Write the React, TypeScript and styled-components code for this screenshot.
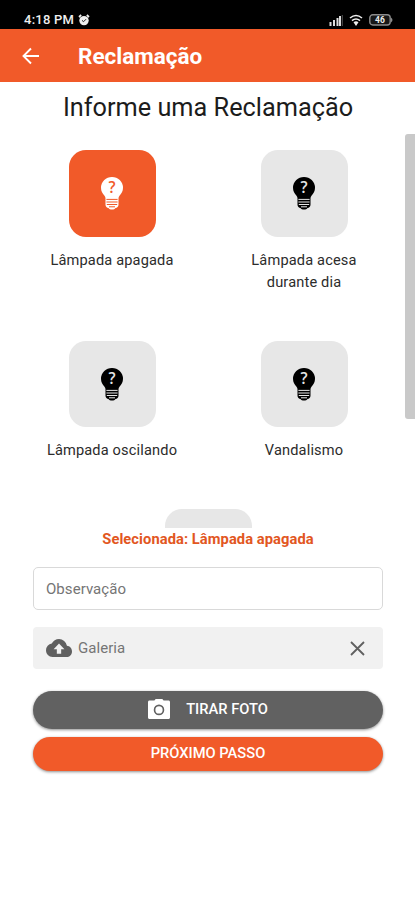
import React from "react";
import styled, { createGlobalStyle } from "styled-components";

const ORANGE = "#f15a29";

const GlobalStyle = createGlobalStyle`
  *, *::before, *::after { box-sizing: border-box; }
  html, body { margin: 0; padding: 0; background: #fff; }
  body { font-family: Roboto, "Liberation Sans", sans-serif; color: #1c1c1c; overflow: hidden; }
  button, input { font-family: inherit; }
`;

const Screen = styled.div`
  display: flex;
  flex-direction: column;
  width: 415px;
  height: 900px;
  background: #fff;
`;

const StatusBar = styled.div`
  display: flex;
  align-items: flex-end;
  justify-content: space-between;
  height: 29px;
  padding: 0 21px 2px 24px;
  background: #000;
  color: #eee;
`;

const StatusGroup = styled.div<{ $gap: number }>`
  display: flex;
  align-items: center;
  gap: ${(p) => p.$gap}px;
  height: 14px;
`;

const Clock = styled.span`
  font-size: 13px;
  font-weight: 500;
  line-height: 14px;
  letter-spacing: 0.25px;
`;

const AppBar = styled.header`
  display: flex;
  align-items: center;
  height: 53px;
  padding-left: 22px;
  background: ${ORANGE};
  color: #fff;
`;

const BackButton = styled.button`
  display: flex;
  width: 18px;
  height: 18px;
  margin-right: 38px;
  padding: 0;
  border: 0;
  background: none;
  color: inherit;
`;

const AppTitle = styled.h1`
  margin: 0;
  font-size: 22.5px;
  font-weight: 700;
  line-height: 28px;
`;

const Heading = styled.h2`
  margin: 0;
  height: 52px;
  padding: 10px 0 0 1px;
  font-size: 25.3px;
  font-weight: 400;
  line-height: 32px;
  text-align: center;
  white-space: nowrap;
`;

const ListArea = styled.div`
  display: flex;
  height: 394px;
  overflow: hidden;
`;

const Options = styled.div`
  display: flex;
  flex-wrap: wrap;
  align-content: flex-start;
  justify-content: center;
  row-gap: 48px;
  width: 384px;
  margin: 0 5px 0 16px;
  padding-top: 16px;
`;

const Option = styled.div`
  display: flex;
  flex-direction: column;
  align-items: center;
  width: 192px;
`;

const Tile = styled.button<{ $selected?: boolean }>`
  display: flex;
  align-items: center;
  justify-content: center;
  width: 87px;
  height: 86.5px;
  margin-bottom: 12px;
  padding: 0;
  border: 0;
  border-radius: 17px;
  background: ${(p) => (p.$selected ? ORANGE : "#e7e7e7")};
  color: ${(p) => (p.$selected ? "#fff" : "#000")};
`;

const OptionLabel = styled.span`
  max-width: 140px;
  font-size: 14.6px;
  line-height: 22px;
  letter-spacing: 0.15px;
  text-align: center;
  color: #2c2c2c;
`;

const ScrollTrack = styled.div`
  width: 10px;
`;

const ScrollThumb = styled.div`
  height: 285px;
  border-radius: 3px 0 0 3px;
  background: #c9c9c9;
`;

const Form = styled.form`
  display: flex;
  flex-direction: column;
  padding: 0 32px 0 33px;
`;

const Selected = styled.p`
  margin: 0 0 17px;
  font-size: 14.7px;
  font-weight: 700;
  line-height: 22px;
  letter-spacing: 0.07px;
  text-align: center;
  color: #e2571f;
`;

const NoteInput = styled.input`
  width: 100%;
  height: 43px;
  margin-bottom: 17px;
  padding: 0 12px;
  border: 1px solid #d9d9d9;
  border-radius: 5px;
  outline: 0;
  background: #fff;
  font-size: 15px;
  letter-spacing: 0.05px;
  &::placeholder { color: #757575; opacity: 1; }
`;

const Gallery = styled.div`
  display: flex;
  align-items: center;
  height: 42px;
  margin-bottom: 22px;
  padding: 0 18px 0 13px;
  border-radius: 4px;
  background: #f1f1f1;
  color: #606060;
`;

const GalleryLabel = styled.span`
  flex: 1;
  margin-left: 6px;
  font-size: 15px;
  letter-spacing: 0.05px;
  color: #757575;
`;

const Action = styled.button<{ $tone: string; $height: number }>`
  display: flex;
  align-items: center;
  justify-content: center;
  gap: 16px;
  height: ${(p) => p.$height}px;
  margin-bottom: 8px;
  padding: 0 0 2px;
  border: 0;
  border-radius: 20px;
  background: ${(p) => p.$tone};
  box-shadow: 0 1px 3px rgba(0, 0, 0, 0.45);
  color: #fff;
  font-size: 14.7px;
  font-weight: 500;
`;

const Glyph = styled.svg`
  display: block;
  flex: none;
`;

const BulbMark = styled.text`
  font: 600 15.5px "Open Sans", sans-serif;
`;

function Bulb({ selected }: { selected?: boolean }) {
  const cut = selected ? ORANGE : "#e7e7e7";
  return (
    <Glyph width="24" height="34" viewBox="0 0 24 34">
      <path
        fill="currentColor"
        d="M12 1a10.9 10.9 0 0 0-11 10.8c0 3.5 1.6 5.9 3.5 8 .7.8 1 1.6 1 2.6v6.3c0 2 1.4 2.9 3 3.3.6 1 1.9 1.5 3.5 1.5s2.9-.5 3.5-1.5c1.6-.4 3-1.3 3-3.3v-6.3c0-1 .3-1.8 1-2.6 1.9-2.1 3.5-4.5 3.5-8A10.9 10.9 0 0 0 12 1z"
      />
      <path d="M6.4 23.4h11.2M6.4 26h11.2M6.8 28.5h10.4M9 30.8h6" stroke={cut} strokeWidth="1" />
      <BulbMark x="12" y="17.3" textAnchor="middle" fill={cut}>?</BulbMark>
    </Glyph>
  );
}

const OPTIONS = [
  { label: "Lâmpada apagada", selected: true },
  { label: "Lâmpada acesa durante dia" },
  { label: "Lâmpada oscilando" },
  { label: "Vandalismo" },
  { label: "" },
];

export default function App() {
  return (
    <>
      <GlobalStyle />
      <Screen>
        <StatusBar>
          <StatusGroup $gap={4}>
            <Clock>4:18 PM</Clock>
            <Glyph width="12" height="12" viewBox="0 0 12 12">
              <path d="M1 3 3.2 1M11 3 8.8 1" stroke="currentColor" strokeWidth="1.7" />
              <circle cx="6" cy="6.6" r="4.7" fill="currentColor" />
              <path d="m4 6.4 1.6 1.3L8 5.2" stroke="#222" fill="none" />
            </Glyph>
          </StatusGroup>
          <StatusGroup $gap={6}>
            <Glyph width="14" height="12" viewBox="0 0 14 12">
              <path d="M1.5 8v4M5 6v6M8.5 4v8" stroke="#ddd" strokeWidth="2" />
              <path d="M11 2v10" stroke="#ddd" strokeWidth="2" />
              <path d="M13.3 1v11" stroke="#555" />
            </Glyph>
            <Glyph width="14" height="13" viewBox="0 0 14 13">
              <path d="M1 4Q7-1 13 4M3 6.7q4-3.4 8 0" stroke="#eee" strokeWidth="1.6" fill="none" />
              <path d="M4.5 8.3q2.5-2 5 0L7 12z" fill="#eee" />
            </Glyph>
            <Glyph width="25" height="12" viewBox="0 0 25 12">
              <rect x=".8" y=".8" width="20.4" height="10.2" rx="3" fill="#171717" stroke="#8c8c8c" strokeWidth="1.4" />
              <path d="M22 3.5q3 2.4 0 5z" fill="#8c8c8c" />
              <text x="11" y="9" textAnchor="middle" fontSize="8.5" fontWeight="700" fill="#eee">46</text>
            </Glyph>
          </StatusGroup>
        </StatusBar>
        <AppBar>
          <BackButton type="button" aria-label="Voltar">
            <Glyph width="18" height="18" viewBox="0 0 18 18">
              <path d="M17 9H2M9 1.5 1.5 9 9 16.5" fill="none" stroke="currentColor" strokeWidth="1.9" />
            </Glyph>
          </BackButton>
          <AppTitle>Reclamação</AppTitle>
        </AppBar>
        <Heading>Informe uma Reclamação</Heading>
        <ListArea>
          <Options>
            {OPTIONS.map((o, i) => (
              <Option key={i}>
                <Tile type="button" $selected={o.selected}>
                  {o.label && <Bulb selected={o.selected} />}
                </Tile>
                <OptionLabel>{o.label}</OptionLabel>
              </Option>
            ))}
          </Options>
          <ScrollTrack>
            <ScrollThumb />
          </ScrollTrack>
        </ListArea>
        <Form>
          <Selected>Selecionada: Lâmpada apagada</Selected>
          <NoteInput placeholder="Observação" />
          <Gallery>
            <Glyph width="26" height="18" viewBox="0 4 24 16" preserveAspectRatio="none">
              <path
                fill="currentColor"
                d="M19.35 10.04A7.49 7.49 0 0 0 12 4C9.11 4 6.6 5.64 5.35 8.04A5.994 5.994 0 0 0 0 14c0 3.31 2.69 6 6 6h13c2.76 0 5-2.24 5-5 0-2.64-2.05-4.78-4.65-4.96zM14 13v4h-4v-4H7l5-5 5 5h-3z"
              />
            </Glyph>
            <GalleryLabel>Galeria</GalleryLabel>
            <Glyph width="15" height="15" viewBox="0 0 15 15">
              <path d="m1 1 13 13M14 1 1 14" stroke="currentColor" strokeWidth="1.8" />
            </Glyph>
          </Gallery>
          <Action type="button" $tone="#616161" $height={38}>
            <Glyph width="22" height="20" viewBox="2 2 20 18" preserveAspectRatio="none">
              <path
                fill="currentColor"
                fillRule="evenodd"
                d="M9 2 7.8 3.4H3.4C2.6 3.4 2 4 2 4.8v13.8c0 .8.6 1.4 1.4 1.4h17.2c.8 0 1.4-.6 1.4-1.4V4.8c0-.8-.6-1.4-1.4-1.4h-4.4L15 2H9zm3 14.6a4.8 4.8 0 1 1 0-9.6 4.8 4.8 0 0 1 0 9.6z"
              />
              <circle cx="12" cy="11.8" r="3.3" fill="currentColor" />
            </Glyph>
            TIRAR FOTO
          </Action>
          <Action type="button" $tone={ORANGE} $height={34}>
            PRÓXIMO PASSO
          </Action>
        </Form>
      </Screen>
    </>
  );
}
